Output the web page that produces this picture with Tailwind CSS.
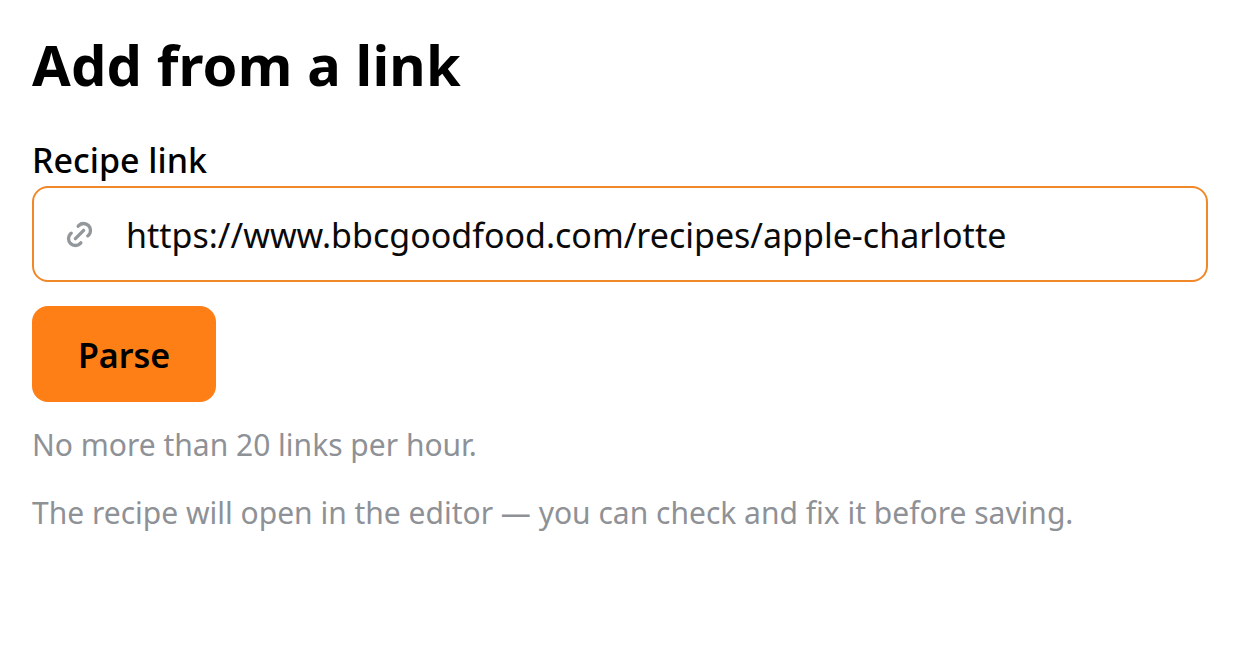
<!doctype html>
<html>
<head>
<meta charset="utf-8">
<script src="https://cdn.jsdelivr.net/npm/@tailwindcss/browser@4"></script>
</head>
<body class="bg-white font-['Noto_Sans',sans-serif]">
<div class="px-8 pt-[26px]">
  <h1 class="text-[56px] tracking-[0.15px] leading-[76px] font-bold text-black">Add from a link</h1>
  <label class="block mt-[35px] text-[34px] leading-[46px] font-medium text-black">Recipe link</label>
  <div class="mt-[3px] flex items-center h-[96px] w-[1176px] rounded-[16px] border-2 border-[#f0882a] pl-[29px]">
    <svg class="w-[33px] h-[33px] text-[#92979b]" viewBox="0 0 24 24" fill="none" stroke="currentColor" stroke-width="2.4" stroke-linecap="round" stroke-linejoin="round"><path d="M9 15l6-6"/><path d="M11 6l.463-.536a5 5 0 0 1 7.071 7.072l-.534.464"/><path d="M13 18l-.397.534a5.068 5.068 0 0 1-7.127 0a4.972 4.972 0 0 1 0-7.071l.524-.463"/></svg>
    <span class="ml-[30px] pt-[2px] text-[34px] leading-[46px] text-[#0a0a0a]">https://www.bbcgoodfood.com/recipes/apple-charlotte</span>
  </div>
  <button class="mt-[24px] block w-[184px] h-[96px] pt-[2px] rounded-[16px] bg-[#ff7f17] text-[34px] font-semibold text-black">Parse</button>
  <p class="mt-[20px] text-[30px] leading-[46px] text-[#8e9196]">No more than 20 links per hour.</p>
  <p class="mt-[22px] text-[30px] leading-[46px] text-[#8e9196]">The recipe will open in the editor — you can check and fix it before saving.</p>
</div>
</body>
</html>
